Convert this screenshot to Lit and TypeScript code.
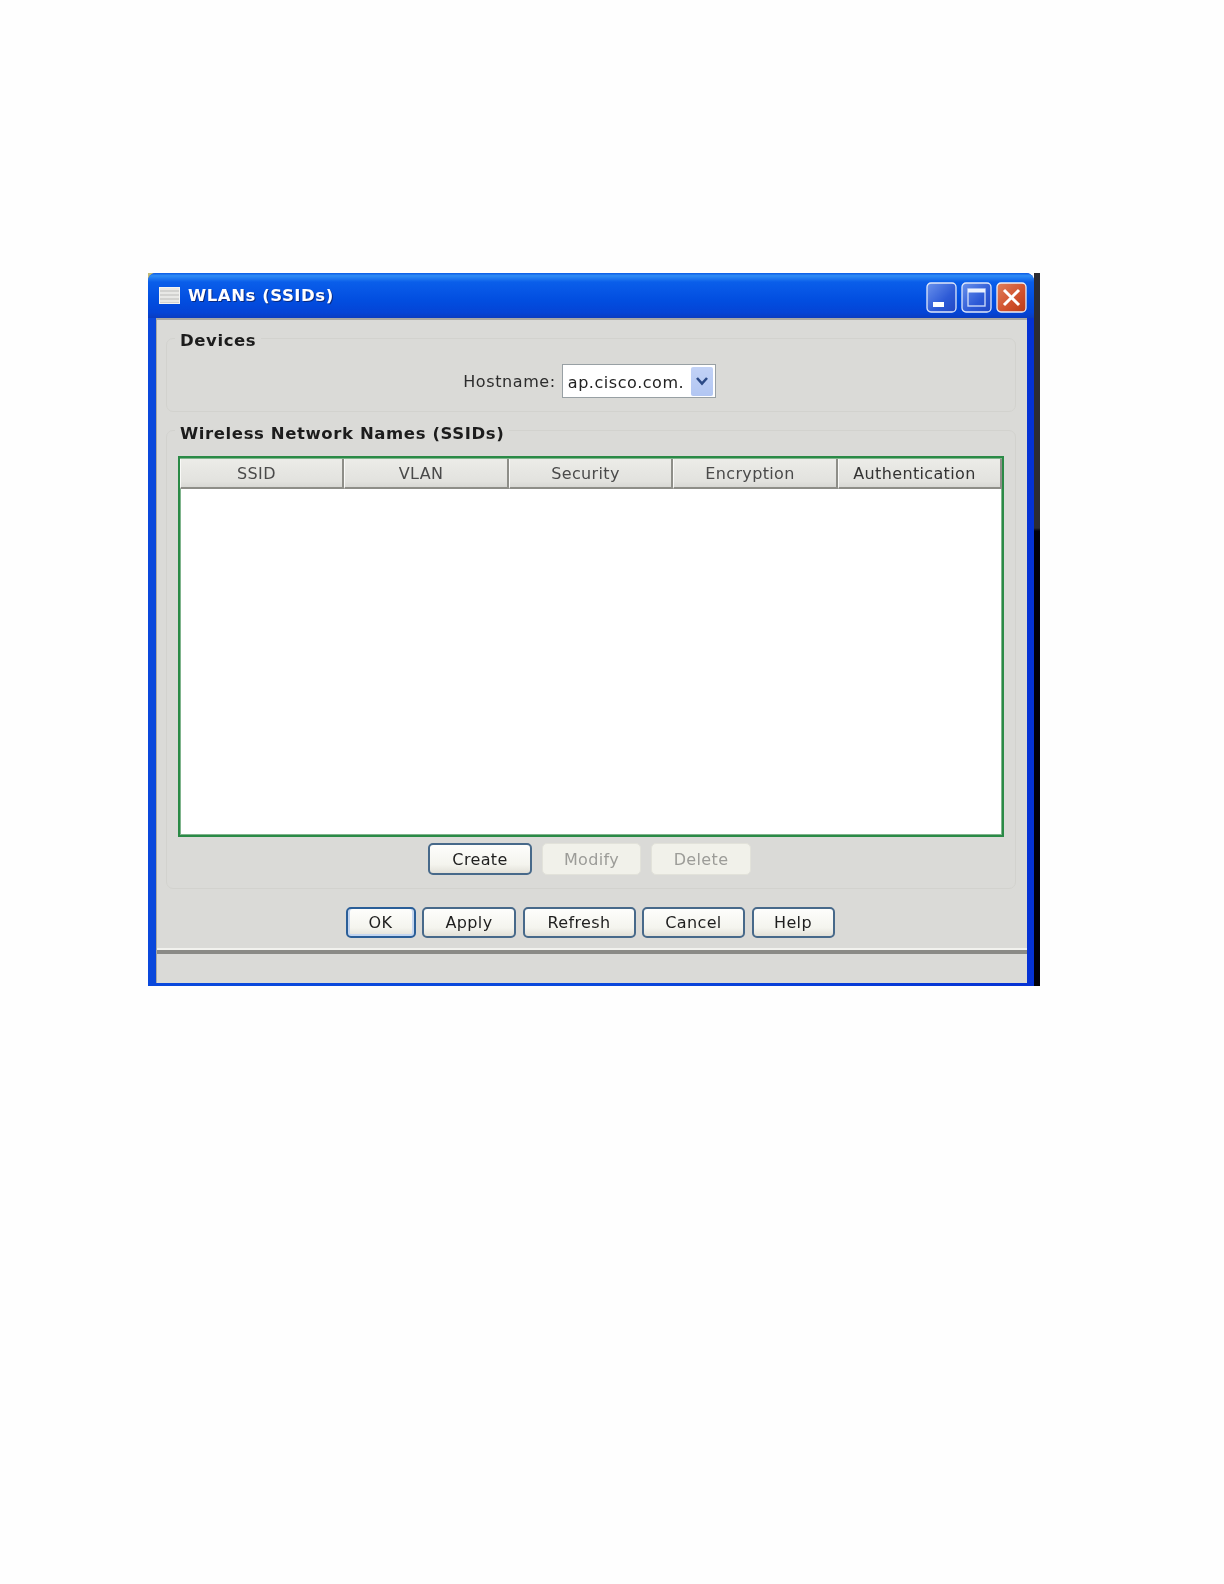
import { LitElement, html, css } from "lit";
import { customElement } from "lit/decorators.js";

@customElement("app-root")
export class AppRoot extends LitElement {
  static styles = css`
    :host { display: block; width: 1224px; height: 1584px; background: #fefefe; font-family: "DejaVu Sans", Verdana, sans-serif; color: #222; overflow: hidden; }
    .page { padding: 273px 0 0 148px; }
    .frame { display: flex; width: 892px; height: 713px; filter: blur(0.45px); background: linear-gradient(135deg, #c4bc78 0, #c4bc78 4px, transparent 6px); }
    .window { flex: 1; display: flex; flex-direction: column; border-radius: 8px 8px 0 0; overflow: hidden; background: linear-gradient(90deg, #0a48dc 0, #0a48dc 50%, #0532d4 100%); }
    .strip { width: 6px; background: linear-gradient(180deg, #2c2c33 0, #2c2c33 255px, #000008 258px, #000008 100%); }
    .title { height: 45px; flex: none; box-sizing: border-box; padding: 0 7px 0 11px; display: flex; align-items: center; gap: 8px;
      background: linear-gradient(180deg, #0a5ae6 0, #2f8cf5 6%, #0a5eea 20%, #024ee0 60%, #0444d6 88%, #0a3cc0 100%); }
    .sysicon { width: 21px; height: 17px; background: repeating-linear-gradient(180deg, #e8e8e6 0, #e8e8e6 2px, #d2d2d0 2px, #d2d2d0 4px); border: 1px solid #f4f4f2; box-sizing: border-box; }
    .ttext { font-weight: 700; font-size: 16.5px; letter-spacing: 0.55px; color: #fff; text-shadow: 1px 1px 0 #0a2a80; flex: 1; }
    .ctrls { display: flex; gap: 4px; margin-top: 4px; }
    .ctl { width: 31px; height: 31px; box-sizing: border-box; display: block; }
    .body { flex: 1; display: flex; flex-direction: column; margin: 0 7px 3px 8px; background: #dadad7; border-top: 2px solid #a8a8a4; border-left: 1px solid #a9a9a6; min-height: 0; }
    .content { flex: 1; display: flex; flex-direction: column; padding: 18px 11px 0 9px; min-height: 0; }
    fieldset { margin: 0; padding: 0; border: 1px solid #d2d2ce; border-radius: 7px; position: relative; min-width: 0; }
    .legend { position: absolute; left: 8px; top: -8px; padding: 0 5px; background: #dadad7; font-weight: 700; font-size: 16.5px; letter-spacing: 0.6px; color: #1c1c1c; line-height: 20px; white-space: nowrap; }
    .devices { height: 74px; box-sizing: border-box; display: flex; justify-content: center; align-items: flex-start; padding: 25px 3px 0 0; gap: 6px; }
    .label { font-size: 16px; letter-spacing: 0.6px; line-height: 36px; color: #2c2c2c; }
    .select { width: 154px; height: 34px; box-sizing: border-box; border: 1px solid #98a0a4; background: #fff; display: flex; align-items: center; justify-content: space-between; padding: 2px 2px 0 5px; font-size: 16px; letter-spacing: 0.55px; color: #222; white-space: nowrap; }
    .arrow { width: 22px; height: 29px; flex: none; margin-top: -2px; background: linear-gradient(180deg, #c2d2f6, #b2c6f2); display: flex; align-items: center; justify-content: center; border-radius: 2px; }
    .wireless { margin-top: 18px; height: 459px; box-sizing: border-box; padding: 25px 11px 0 11px; display: flex; flex-direction: column; }
    .wireless .legend { top: -7px; }
    .table { height: 381px; flex: none; box-sizing: border-box; border: 2px solid #2a8a46; box-shadow: inset 0 0 0 1px #7fb48c; background: #fff; padding: 1px 0 0 0; }
    .head { display: grid; grid-template-columns: 164px 165px 164px 165px 164px; height: 30px; }
    .th { box-sizing: border-box; display: flex; align-items: center; justify-content: center; font-size: 16px; letter-spacing: 0.35px; color: #4a4a4a; background: linear-gradient(180deg, #ecece8, #e2e2de 80%, #d8d8d4); border-right: 2px solid #8e8e88; border-bottom: 2px solid #8e8e88; border-left: 1px solid #fafaf8; padding: 1px 10px 0 0; }
    .th.auth { color: #333; }
    .row1 { display: flex; justify-content: center; gap: 10px; margin-top: 6px; padding-right: 3px; }
    .row1 button { height: 32px; padding-top: 1px; }
    .row2 { display: flex; justify-content: center; gap: 6.5px; margin-top: 18px; padding-right: 2px; }
    button { box-sizing: border-box; height: 31px; padding: 0; font: inherit; font-size: 16px; letter-spacing: 0.35px; color: #1e1e1e; border: 2px solid #47698a; border-radius: 5px; background: linear-gradient(180deg, #fefefc, #f4f4ee 70%, #e2e0d8); }
    button.dis { border: 1px solid #e2e2da; background: #f1f1ea; color: #9c9c98; }
    button.def { box-shadow: inset 2px 0 0 #c4d6f0, inset -2px 0 0 #c4d6f0, inset 0 -2px 0 #c4d6f0; border-color: #2a5e98; }
    .status { flex: none; height: 33px; box-sizing: border-box; border-top: 4px solid #8a8a86; box-shadow: 0 -2px 0 #f2f2ee; background: #dadad7; }
  `;

  render() {
    return html`<div class="page"><div class="frame">
      <div class="window">
        <div class="title">
          <div class="sysicon"></div>
          <div class="ttext">WLANs (SSIDs)</div>
          <div class="ctrls">
            <svg class="ctl" viewBox="0 0 31 31"><defs><linearGradient id="b" x1="0" y1="0" x2="1" y2="1"><stop offset="0" stop-color="#6a92ec"/><stop offset="0.6" stop-color="#2d5ad6"/><stop offset="1" stop-color="#2248c4"/></linearGradient><linearGradient id="r" x1="0" y1="0" x2="1" y2="1"><stop offset="0" stop-color="#e0805c"/><stop offset="0.6" stop-color="#d0502c"/><stop offset="1" stop-color="#b83c18"/></linearGradient></defs><rect x="1" y="1" width="29" height="29" rx="4" fill="url(#b)" stroke="#dfe8fa" stroke-width="1.3"/><rect x="7" y="20" width="11" height="5" fill="#fff"/></svg>
            <svg class="ctl" viewBox="0 0 31 31"><rect x="1" y="1" width="29" height="29" rx="4" fill="url(#b)" stroke="#dfe8fa" stroke-width="1.3"/><rect x="7" y="7" width="17" height="17" fill="none" stroke="#c8d8f8" stroke-width="1.4"/><rect x="7" y="7" width="17" height="3.5" fill="#eef3fe"/></svg>
            <svg class="ctl" viewBox="0 0 31 31"><rect x="1" y="1" width="29" height="29" rx="4" fill="url(#r)" stroke="#eef0f6" stroke-width="1.3"/><path d="M8 8 L23 23 M23 8 L8 23" stroke="#fff" stroke-width="3" fill="none"/></svg>
          </div>
        </div>
        <div class="body">
          <div class="content">
            <fieldset class="devices">
              <div class="legend">Devices</div>
              <span class="label">Hostname:</span>
              <div class="select"><span>ap.cisco.com.</span><span class="arrow"><svg width="14" height="10" viewBox="0 0 14 10"><path d="M2 2 L7 7.5 L12 2" fill="none" stroke="#2c4a86" stroke-width="2.6"/></svg></span></div>
            </fieldset>
            <fieldset class="wireless">
              <div class="legend">Wireless Network Names (SSIDs)</div>
              <div class="table">
                <div class="head">
                  <div class="th">SSID</div><div class="th">VLAN</div><div class="th">Security</div><div class="th">Encryption</div><div class="th auth">Authentication</div>
                </div>
              </div>
              <div class="row1">
                <button style="width:104px">Create</button>
                <button class="dis" style="width:99px">Modify</button>
                <button class="dis" style="width:100px">Delete</button>
              </div>
            </fieldset>
            <div class="row2">
              <button class="def" style="width:70px">OK</button>
              <button style="width:94px">Apply</button>
              <button style="width:113px">Refresh</button>
              <button style="width:103px">Cancel</button>
              <button style="width:83px">Help</button>
            </div>
          </div>
          <div class="status"></div>
        </div>
      </div>
      <div class="strip"></div>
    </div></div>`;
  }
}
